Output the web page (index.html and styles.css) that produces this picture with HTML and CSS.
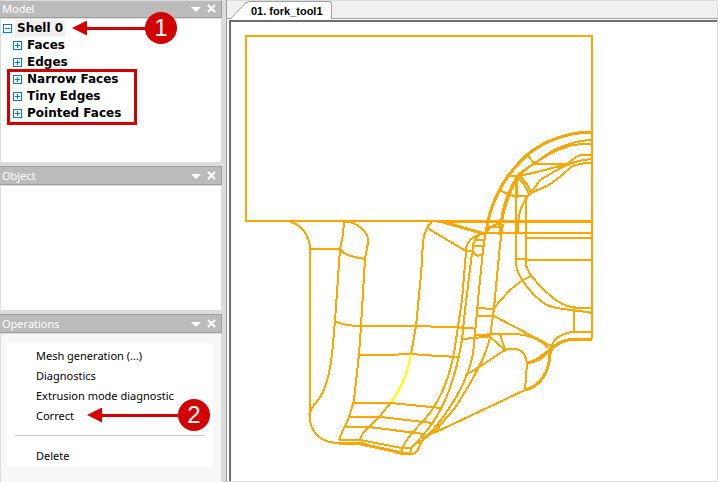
FILE: index.html
```
<!DOCTYPE html>
<html lang="en">
<head>
<meta charset="utf-8" />
<title>fork_tool1</title>
<link rel="stylesheet" href="styles.css">
</head>
<body>
  <aside>
    <section class="panel model">
      <header>
        <h2>Model</h2>
        <button type="button" class="tool" aria-label="Menu"><svg width="10" height="10"><path d="M0 3h10L5 8z" fill="#fff"/></svg></button>
        <button type="button" class="tool" aria-label="Close"><svg width="10" height="10"><path d="M1 1l7 7M8 1l-7 7" stroke="#fff" stroke-width="2"/></svg></button>
      </header>
      <div class="body">
        <ul class="tree">
          <li class="root"><button type="button" class="box" aria-label="Collapse"></button><span class="name">Shell 0</span></li>
          <li><button type="button" class="box plus" aria-label="Expand"></button><span class="name">Faces</span></li>
          <li><button type="button" class="box plus" aria-label="Expand"></button><span class="name">Edges</span></li>
          <li><button type="button" class="box plus" aria-label="Expand"></button><span class="name">Narrow Faces</span></li>
          <li><button type="button" class="box plus" aria-label="Expand"></button><span class="name">Tiny Edges</span></li>
          <li><button type="button" class="box plus" aria-label="Expand"></button><span class="name">Pointed Faces</span></li>
        </ul>
        <div class="frame"></div>
        <div class="callout one"><i></i><b>1</b></div>
      </div>
    </section>

    <section class="panel object">
      <header>
        <h2>Object</h2>
        <button type="button" class="tool" aria-label="Menu"><svg width="10" height="10"><path d="M0 3h10L5 8z" fill="#fff"/></svg></button>
        <button type="button" class="tool" aria-label="Close"><svg width="10" height="10"><path d="M1 1l7 7M8 1l-7 7" stroke="#fff" stroke-width="2"/></svg></button>
      </header>
      <div class="body"></div>
    </section>

    <section class="panel operations">
      <header>
        <h2>Operations</h2>
        <button type="button" class="tool" aria-label="Menu"><svg width="10" height="10"><path d="M0 3h10L5 8z" fill="#fff"/></svg></button>
        <button type="button" class="tool" aria-label="Close"><svg width="10" height="10"><path d="M1 1l7 7M8 1l-7 7" stroke="#fff" stroke-width="2"/></svg></button>
      </header>
      <div class="body">
        <div class="list">
          <button type="button">Mesh generation (...)</button>
          <button type="button">Diagnostics</button>
          <button type="button">Extrusion mode diagnostic</button>
          <button type="button">Correct</button>
          <hr>
          <button type="button">Delete</button>
        </div>
        <div class="callout two"><i></i><b>2</b></div>
      </div>
    </section>
  </aside>

  <main>
    <nav>
      <svg class="slope" width="17" height="18"><path d="M0 18L16 1h1v17z" fill="#fff"/><path d="M0 17.500L15 1.500h2" fill="none" stroke="#a0a0a0"/></svg>
      <button type="button" class="tab">01. fork_tool1</button>
    </nav>
    <div class="view">
      <svg class="drawing" viewBox="231 22 487 460" width="487" height="460">
        <!-- block -->
        <path d="M245 36H593M246 36V221M245 221H592M592 36V339"/>
        <path class="thick" d="M437 221.500H592"/>

        <!-- left leg -->
        <path d="M290 222C300 224 310 235 310 249V417C310 434 323 443 339 443M310 249H340"/>
        <path d="M344 222L343 235L340 249L335 321L332 355C329 378 324 393 318 400L312 408L309 415"/>
        <path d="M345 222C357 221 370 234 368 243L365 259L361 326L359 354L354 400C351 412 348 422 343 430L339 440"/>
        <path d="M340 249C345 256 355 257 365 259M334 321C343 325 352 326 361 326H416L474 328"/>
        <path d="M432 222C426 226 424 235 423 242L421 275L416 326L411 354"/>
        <path d="M359 355H395L401 354H411L437 356L460 357M354 403H391L441 408M350 417H381L432 423M346 427H369L424 434"/>
        <path d="M391 402L380 416L369 427C364 431 361 435 360 440"/>
        <path d="M339 440H360L402 448H411V452M339 443H361L402 454H412C421 453 417 444 424 439L440 427"/>
        <path class="thick" d="M339 443L361 444L402 453H411"/>
        <path class="mark" d="M411 354C408 372 402 388 391 402"/>

        <!-- long ribs -->
        <path d="M427 228L466 251H472"/>
        <path d="M466 252L462 300L456 340C452 372 441 402 424 420C411 434 402 443 402 453"/>
        <path d="M472 253L465 310L462 340C457 370 448 402 431 425C424 435 417 442 411 448"/>
        <path d="M487 224L483 250L479 290L474 345C472 372 456 402 433 430L422 440"/>
        <path d="M503 224L500 245L494 308L490 337C485 361 468 387 455 408L434 432"/>
        <path d="M485 233C471 236 466 243 466 251M480 234C472 241 472 247 473 252C476 257 480 256 482 254M474 240H484M474 246H483"/>
        <path d="M487 231L494 225L502 223M488 227H502"/>
        <path class="thick" d="M443 222L485 234"/>
        <path d="M477 308L494 309M477 316H494L551 346"/>

        <!-- foot -->
        <path d="M463 339L485 337L490 336M475 335L500 334H515C530 335 541 340 548 348M500 334L505 350M490 337L505 350L473 371L465 375"/>
        <path d="M505 350C518 347 525 350 527 363L525 390M527 363C540 362 545 356 551 348M527 363L537 359L549 350"/>
        <path d="M525 390L434 433M422 441L416 443M592 332H572C560 334 553 340 551 348"/>
        <path class="thick" d="M592 339H575C561 340 550 347 550 354C549 372 541 386 525 390"/>

        <!-- round boss -->
        <path class="thick" d="M592 132C568 132 544 141 527 155C509 172 500 186 492 207C488 217 487 226 486 234"/>
        <path d="M592 140C577 140 562 146 552 151L535 163C528 168 520 171 516 178C507 194 502 207 501 222L499 235"/>
        <path d="M592 144H581C567 145 552 152 541 159C526 169 518 175 514 184C507 200 503 212 502 223"/>
        <path d="M527 155L535 164H567M506 176H520L545 170L567 164L576 157C581 154 586 155 592 155"/>
        <path d="M592 159C576 160 565 165 555 171L540 180L531 193L549 185L561 176L571 167C578 163 585 163 592 163"/>
        <path d="M517 177L524 184L529 194M520 176L527 184L531 193M498 190L514 196H526V265M516 176V265"/>
        <path d="M531 193C523 201 517 214 518 232"/>
        <path class="thick" d="M516 178V198M517 222V233"/>
        <path d="M487 233H592M526 238H592M526 260H592M516 259H526"/>
        <path d="M516 265C518 278 532 295 545 304C558 311 574 309 592 313M526 265C528 274 539 286 553 298C567 309 577 308 592 308"/>
        <path d="M531 276C515 283 506 294 494 308M574 308V331"/>
      </svg>
    </div>
  </main>
</body>
</html>
```
FILE: styles.css
```
*{
  margin:0;
  padding:0;
  box-sizing:border-box;
}
body{
  display:flex;
  min-height:100vh;
  background:#dcdcdc;
  font:11px "Noto Sans", sans-serif;
  color:#000;
}
button{
  border:0;
  background:none;
  font:inherit;
  color:inherit;
}
aside{
  display:flex;
  flex-direction:column;
  gap:4px;
  flex:0 0 226px;
  padding-right:4px;
}
.panel{
  display:flex;
  flex-direction:column;
}
.panel header{
  display:flex;
  align-items:center;
  gap:6px;
  height:19px;
  padding:0 4px 0 2px;
  background:#bbb;
  border:1px solid #9e9e9e;
  border-left:0;
}
.model header{
  height:18px;
  border-top-color:#dcdcdc;
}
.panel h2{
  flex:1;
  font-size:11px;
  font-weight:normal;
  line-height:16px;
  color:#fff;
}
.tool{
  width:10px;
  height:10px;
}
.tool svg{
  display:block;
}
.body{
  position:relative;
  flex:1;
  margin:1px 1px 0 1px;
  background:#fff;
}
.model .body{
  min-height:143px;
}
.object .body{
  min-height:124px;
}
.operations{
  flex:1;
}
.operations .body{
  padding:9px 8px 0 6px;
  background:#f7f7f7;
}
.tree{
  list-style:none;
  padding:1px 0 0 2px;
  font:bold 12px "DejaVu Sans", sans-serif;
}
.tree li{
  display:flex;
  align-items:center;
  gap:3px;
  height:17px;
  padding-left:10px;
}
.tree .root{
  padding-left:0;
}
.name{
  padding:0 2px;
  line-height:17px;
}
.root .name{
  background:#f0f0f0;
}
.box{
  width:9px;
  height:9px;
  border:1px solid #0078d7;
  background:linear-gradient(#0078d7,#0078d7) center/5px 1px no-repeat;
}
.plus{
  background:linear-gradient(#0078d7,#0078d7) center/5px 1px no-repeat, linear-gradient(#0078d7,#0078d7) center/1px 5px no-repeat;
}
/* red marks over the panels */
.frame{
  position:absolute;
  top:50px;
  left:6px;
  width:130px;
  height:56px;
  border:3px solid #d20000;
}
.callout{
  position:absolute;
  display:flex;
  align-items:center;
}
.one{
  top:-7px;
  left:71px;
}
.two{
  top:65px;
  left:86px;
}
.callout i{
  width:15px;
  height:15px;
  background:#d20000;
  clip-path:polygon(0 50%,100% 0,100% 100%);
}
.callout b{
  width:32px;
  height:32px;
  border-radius:50%;
  background:#d20000;
  color:#fff;
  font:24px/32px "Liberation Sans", sans-serif;
  text-align:center;
}
.callout::before{
  content:"";
  position:absolute;
  left:14px;
  right:30px;
  height:3px;
  background:#d20000;
}
.one b{
  margin-left:58px;
}
.two b{
  margin-left:76px;
}
.list{
  display:flex;
  flex-direction:column;
  padding:3px 8px 1px;
  background:#fff;
}
.list button{
  height:20px;
  padding-left:21px;
  line-height:20px;
  text-align:left;
}
.list hr{
  margin:9px 0 10px;
  border:0;
  border-top:1px solid #c8c8c8;
}
main{
  flex:1;
  display:flex;
  flex-direction:column;
  min-width:0;
  padding:1px 1px 1px 0;
  border-left:1px solid #9a9a9f;
}
nav{
  display:flex;
  height:18px;
  padding-left:4px;
  background:#f0f0f0;
  border-bottom:1px solid #a0a0a5;
}
.slope{
  display:block;
}
.tab{
  height:18px;
  padding:0 8px 0 3px;
  border-top:1px solid #a0a0a0;
  border-right:1px solid #a0a0a0;
  border-radius:0 3px 0 0;
  background:#fff;
  font:bold 11px "Liberation Sans", sans-serif;
}
.view{
  flex:1;
  padding:1px 0 0 2px;
  background:#fff;
  overflow:hidden;
}
/* the drawing keeps its scale, the view only crops it */
.drawing{
  display:block;
  box-sizing:content-box;
  margin-bottom:-4px;
  border-top:2px solid #6e6e6e;
  border-left:2px solid #6e6e6e;
}
.drawing path{
  fill:none;
  stroke:#ffa500;
  stroke-width:2;
  shape-rendering:crispEdges;
}
.drawing .thick{
  stroke-width:3;
}
.drawing .mark{
  stroke:#ff0;
}
```
